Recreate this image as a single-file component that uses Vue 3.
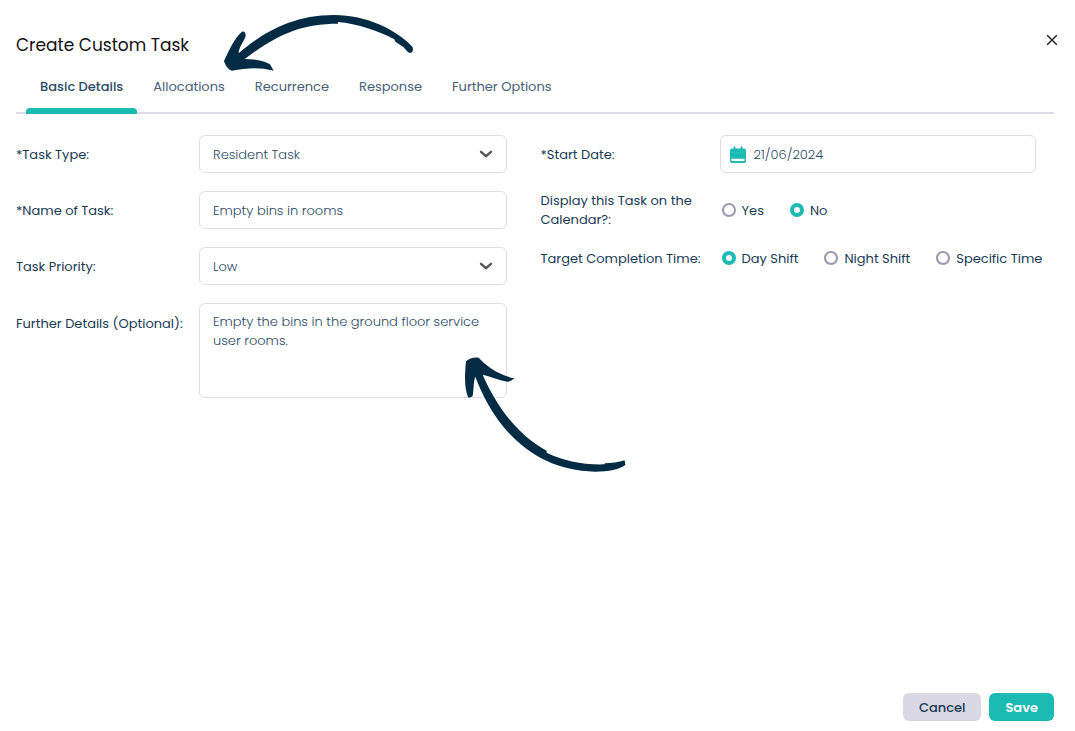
<template>
  <form class="task-form" @submit.prevent>
    <header class="task-form__header">
      <h1 class="task-form__title">Create Custom Task</h1>
      <button type="button" class="task-form__close" aria-label="Close">
        <svg width="12" height="12" viewBox="0 0 12 12">
          <path d="M1.2 1.2 10.8 10.8M10.8 1.2 1.2 10.8" fill="none" stroke="#222" stroke-width="1.4" />
        </svg>
      </button>
    </header>

    <nav class="tabs">
      <button
        v-for="tab in tabs"
        :key="tab"
        type="button"
        class="tabs__item"
        :class="{ 'tabs__item--active': tab === activeTab }"
        @click="activeTab = tab"
      >
        {{ tab }}
      </button>
    </nav>

    <div class="fields">
      <div class="fields__column">
        <div class="field">
          <label class="field__label" for="task-type">*Task Type:</label>
          <div class="field__control">
            <select id="task-type" v-model="form.type" class="input input--select">
              <option>Resident Task</option>
              <option>Staff Task</option>
            </select>
            <svg class="field__chevron" width="14" height="10" viewBox="0 0 14 10">
              <path d="M2 2.8 7 7.2 12 2.8" />
            </svg>
          </div>
        </div>
        <div class="field">
          <label class="field__label" for="task-name">*Name of Task:</label>
          <div class="field__control">
            <input id="task-name" v-model="form.name" type="text" class="input" />
          </div>
        </div>
        <div class="field">
          <label class="field__label" for="task-priority">Task Priority:</label>
          <div class="field__control">
            <select id="task-priority" v-model="form.priority" class="input input--select">
              <option>Low</option>
              <option>Medium</option>
              <option>High</option>
            </select>
            <svg class="field__chevron" width="14" height="10" viewBox="0 0 14 10">
              <path d="M2 2.8 7 7.2 12 2.8" />
            </svg>
          </div>
        </div>
        <div class="field field--top">
          <label class="field__label" for="task-details">Further Details (Optional):</label>
          <div class="field__control">
            <textarea id="task-details" v-model="form.details" class="input input--area"></textarea>
          </div>
        </div>
      </div>

      <div class="fields__column">
        <div class="field">
          <label class="field__label" for="task-date">*Start Date:</label>
          <div class="field__control">
            <svg class="field__calendar" width="16" height="18" viewBox="0 0 16 18">
              <path d="M2 2.4h1.6V1.2a.9.9 0 0 1 1.8 0v1.2h5.2V1.2a.9.9 0 0 1 1.8 0v1.2H14a2 2 0 0 1 2 2V15a2 2 0 0 1-2 2H2a2 2 0 0 1-2-2V4.400a2 2 0 0 1 2-2Z" fill="#1bbab2" />
              <path d="M1.500 12.800h13v1.600a.6.6 0 0 1-.6.6H2.100a.6.6 0 0 1-.6-.6Z" fill="#fff" />
              <path d="M2 6.500h12" stroke="#5fd0ca" stroke-width=".6" stroke-dasharray="1 1" />
            </svg>
            <input id="task-date" v-model="form.date" type="text" class="input input--date" />
          </div>
        </div>
        <div class="field" role="radiogroup" aria-labelledby="calendar-label">
          <span id="calendar-label" class="field__label">Display this Task on the Calendar?:</span>
          <div class="field__control radios">
            <label v-for="option in calendarOptions" :key="option" class="radio">
              <input v-model="form.calendar" type="radio" name="calendar" class="radio__input" :value="option" />
              {{ option }}
            </label>
          </div>
        </div>
        <div class="field field--short" role="radiogroup" aria-labelledby="time-label">
          <span id="time-label" class="field__label">Target Completion Time:</span>
          <div class="field__control radios">
            <label v-for="option in timeOptions" :key="option" class="radio">
              <input v-model="form.time" type="radio" name="time" class="radio__input" :value="option" />
              {{ option }}
            </label>
          </div>
        </div>
      </div>
    </div>

    <footer class="task-form__footer">
      <button type="button" class="btn btn--cancel">Cancel</button>
      <button type="submit" class="btn btn--save">Save</button>
    </footer>

    <svg class="arrow arrow--tabs" width="220" height="75" viewBox="0 0 660 225" aria-hidden="true">
      <path d="M42 168C55 140 72 100 96 80C104 77 109 86 106 96C100 112 86 128 86 145C150 90 240 30 372 30C470 30 560 75 607 125C612 135 606 144 600 144C592 142 588 134 580 126L556 110L553 103C510 79 440 55 384 51L384 56C270 56 200 90 104 162C135 162 160 166 180 178L191 197C150 186 110 188 66 197C55 195 45 180 42 168Z" />
    </svg>
    <svg class="arrow arrow--details" width="220" height="190" viewBox="0 0 660 570" aria-hidden="true">
      <path d="M108 184C118 175 130 171 146 173C170 200 210 226 253 235C246 241 240 246 232 245C205 240 180 228 158 224C195 310 260 405 350 452L350 458C400 482 460 495 524 493L524 490C545 489 565 487 584 481L586 495C570 508 535 515 495 515C380 512 290 465 220 380C180 330 155 280 136 230C130 245 132 265 128 288C124 292 120 293 115 293C104 270 103 235 108 184Z" />
    </svg>
  </form>
</template>

<script setup>
import { reactive, ref } from 'vue'

const tabs = ['Basic Details', 'Allocations', 'Recurrence', 'Response', 'Further Options']
const calendarOptions = ['Yes', 'No']
const timeOptions = ['Day Shift', 'Night Shift', 'Specific Time']

const activeTab = ref('Basic Details')

const form = reactive({
  type: 'Resident Task',
  name: 'Empty bins in rooms',
  priority: 'Low',
  details: 'Empty the bins in the ground floor service user rooms.',
  date: '21/06/2024',
  calendar: 'No',
  time: 'Day Shift'
})
</script>

<style>
body {
  background: #fff;
}
</style>

<style scoped>
.task-form,
.task-form * {
  box-sizing: border-box;
}

.task-form {
  position: relative;
  display: flex;
  flex-direction: column;
  min-height: 100vh;
  color: #173a55;
  font-family: Poppins, Inter, "Open Sans", sans-serif;
  font-size: 13px;
  line-height: 19px;
}

.task-form button,
.task-form input,
.task-form select,
.task-form textarea {
  font-family: inherit;
}

.task-form__header {
  display: flex;
  justify-content: space-between;
  align-items: flex-start;
  padding: 28px 11px 0 16px;
}

.task-form__title {
  margin: 5px 0 0;
  color: #111;
  font-size: 17px;
  font-weight: 400;
  line-height: 24px;
}

.task-form__close {
  display: flex;
  align-items: center;
  justify-content: center;
  width: 24px;
  height: 24px;
  padding: 0;
  border: 0;
  background: transparent;
}

.tabs {
  display: flex;
  gap: 2px;
  margin: 18px 21px 0 16px;
  padding-left: 10px;
  border-bottom: 2px solid #dcdbe6;
}

.tabs__item {
  position: relative;
  padding: 0 14px 13px;
  border: 0;
  background: transparent;
  color: #456078;
  font-size: 13px;
  font-weight: 400;
  line-height: 24px;
}

.tabs__item--active {
  color: #2b4b66;
  font-weight: 500;
}

.tabs__item--active::after {
  content: '';
  position: absolute;
  right: 0;
  bottom: -2px;
  left: 0;
  height: 6px;
  border-radius: 4px 4px 0 0;
  background: #1bbab2;
}

.fields {
  display: grid;
  grid-template-columns: minmax(0, 99fr) minmax(0, 100fr);
  gap: 34px;
  padding: 21px 39px 0 16px;
}

.fields__column {
  display: flex;
  flex-direction: column;
  gap: 18px;
}

.field {
  display: grid;
  grid-template-columns: 183px minmax(0, 1fr);
  align-items: center;
  min-height: 38px;
}

.fields__column + .fields__column .field {
  grid-template-columns: 179px minmax(0, 1fr);
}

.fields__column .field--short {
  min-height: 22px;
}

.field--top {
  align-items: start;
}

.field--top .field__label {
  padding-top: 11px;
}

.field__label {
  padding-right: 16px;
}

.field__control {
  position: relative;
  display: flex;
}

.field__chevron {
  position: absolute;
  top: 14px;
  right: 14px;
  fill: none;
  stroke: #555;
  stroke-width: 2.4;
  stroke-linecap: round;
  pointer-events: none;
}

.field__calendar {
  position: absolute;
  top: 11px;
  left: 10px;
}

.input {
  width: 100%;
  height: 38px;
  margin: 0;
  padding: 1px 13px 0;
  border: 1px solid #dedde9;
  border-radius: 6px;
  outline: 0;
  background: #fff;
  color: #2b4b66;
  font-size: 13px;
  font-weight: 300;
  line-height: 19px;
}

.input--select {
  appearance: none;
}

.input--date {
  padding-left: 33px;
}

.input--area {
  height: 95px;
  padding: 8px 13px;
  resize: none;
}

.radios {
  gap: 26px;
  padding-left: 2px;
}

.radio {
  display: flex;
  align-items: center;
  gap: 6px;
  white-space: nowrap;
}

.radio__input {
  flex: none;
  width: 14px;
  height: 14px;
  margin: 0;
  border: 2px solid #9c97b0;
  border-radius: 50%;
  background: #fff;
  appearance: none;
}

.radio__input:checked {
  border: 4px solid #1bbab2;
}

.task-form__footer {
  display: flex;
  justify-content: flex-end;
  gap: 8px;
  margin-top: auto;
  padding: 16px 21px 10px;
}

.btn {
  height: 28px;
  padding: 0 16px;
  border: 0;
  border-radius: 6px;
  font-size: 13px;
  line-height: 19px;
}

.btn--cancel {
  background: #d9d8e4;
  color: #173a55;
  font-weight: 500;
}

.btn--save {
  background: #1bbab2;
  color: #fff;
  font-weight: 600;
}

.arrow {
  position: absolute;
  fill: #032b44;
  pointer-events: none;
}

.arrow--tabs {
  top: 5px;
  left: 210px;
}

.arrow--details {
  top: 300px;
  left: 430px;
}
</style>
